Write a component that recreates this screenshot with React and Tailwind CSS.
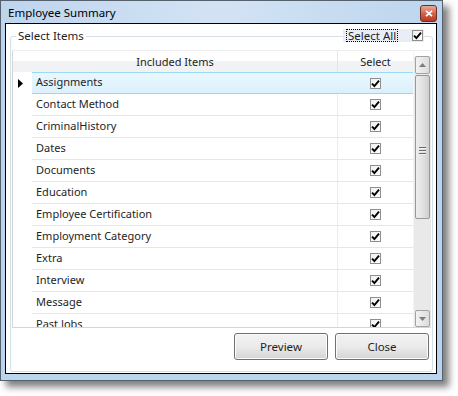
import React from 'react';

const items = [
    'Assignments',
    'Contact Method',
    'CriminalHistory',
    'Dates',
    'Documents',
    'Education',
    'Employee Certification',
    'Employment Category',
    'Extra',
    'Interview',
    'Message',
    'Past Jobs',
];

function CheckBox() {
    return (
        <span className="flex w-[11px] h-[11px] items-center justify-center border border-[#8e8f8f] bg-gradient-to-br from-[#f0f0f0] to-white">
            <svg width="9" height="9" viewBox="0 0 9 9">
                <path d="M1 4.6 L3.4 7 L8 1.6" fill="none" stroke="#000" strokeWidth="1.9" />
            </svg>
        </span>
    );
}

function WinButton({ label }) {
    return (
        <button className="w-[94px] h-[27px] rounded-[3px] border border-[#707070] bg-gradient-to-b from-[#f2f2f2] via-[#ebebeb] to-[#d4d4d4] text-[11.5px] text-[#1e1e1e] shadow-[inset_0_0_0_1px_#fcfcfc]">
            {label}
        </button>
    );
}

function ScrollBar() {
    return (
        <div className="w-[18px] flex flex-col bg-[#e9e9e9] border-l border-[#f4f4f4] pl-[1px] pr-[1px]">
            <div className="h-[5px] bg-white -mx-[1px]"></div>
            <div className="h-[18px] flex items-center justify-center rounded-[2px] border border-[#a3a3a3] bg-gradient-to-r from-[#f3f3f3] to-[#dcdcdc]">
                <svg width="7" height="4" viewBox="0 0 7 4">
                    <polygon points="0,4 3.5,0 7,4" fill="#7d7d7d" />
                </svg>
            </div>
            <div className="h-[144px] mt-[1px] flex items-center justify-center rounded-[2px] border border-[#989898] bg-gradient-to-r from-[#eeeeee] via-[#e2e2e2] to-[#cfcfcf]">
                <div className="flex flex-col gap-[1px] mt-[8px]">
                    <div className="w-[7px] h-[2px] border-t border-b border-t-[#6a6a6a] border-b-[#f0f0f0]"></div>
                    <div className="w-[7px] h-[2px] border-t border-b border-t-[#6a6a6a] border-b-[#f0f0f0]"></div>
                    <div className="w-[7px] h-[2px] border-t border-b border-t-[#6a6a6a] border-b-[#f0f0f0]"></div>
                </div>
            </div>
            <div className="flex-1"></div>
            <div className="h-[17px] flex items-center justify-center rounded-[2px] border border-[#a3a3a3] bg-gradient-to-r from-[#f3f3f3] to-[#dcdcdc]">
                <svg width="7" height="4" viewBox="0 0 7 4">
                    <polygon points="0,0 3.5,4 7,0" fill="#7d7d7d" />
                </svg>
            </div>
        </div>
    );
}

export default function App() {
    return (
        <div className="w-[458px] h-[396px] bg-white font-['Noto_Sans',sans-serif] text-[11px] text-[#1e1e1e] leading-none">
            <div className="w-[443px] h-[381px] flex flex-col border border-[#56616e] bg-[#bcd5ef] shadow-[6px_6px_7px_rgba(0,0,0,0.5)]">
                {/* title bar */}
                <div className="h-[22px] flex items-center justify-between pl-[7px] pr-[5px] bg-gradient-to-r from-[#bed5ee] via-[#d3e3f4] to-[#bcd5ee]">
                    <span className="text-[11.5px] text-black mt-[1px]">Employee Summary</span>
                    <div className="w-[17px] h-[17px] mt-[3px] flex items-center justify-center rounded-[3px] border border-[#6b3024] bg-gradient-to-b from-[#e9a898] via-[#d4634c] to-[#b8361f]">
                        <svg width="8" height="7" viewBox="0 0 8 7">
                            <path d="M1 0.8 L7 6.2 M7 0.8 L1 6.2" stroke="#fff" strokeWidth="1.8" />
                        </svg>
                    </div>
                </div>

                <div className="flex-1 flex pl-[4px] pr-[5px] pb-[6px]">
                    {/* client area */}
                    <div className="flex-1 flex flex-col border border-black bg-white pl-[4px] pr-[3px] pt-[12px] pb-[1px]">
                        {/* group box */}
                        <div className="relative flex-1 flex flex-col border border-[#d5dfe5] rounded-[3px] px-[1px]">
                            <span className="absolute left-[5px] -top-[8px] px-[2px] bg-white leading-[14px] text-[11.5px]">Select Items</span>
                            <div className="absolute left-[332px] -top-[8px] w-[81px] h-[13px] flex items-center justify-between bg-[#e9eef6] pl-[3px] pr-[1px]">
                                <span className="px-[1px] h-[13px] leading-[11px] whitespace-nowrap border border-dotted border-black text-[11.5px]">Select All</span>
                                <CheckBox />
                            </div>

                            {/* grid */}
                            <div className="mt-[13px] h-[278px] flex border-l border-b border-t border-[#d5d5d5] border-t-[#ececec] bg-white">
                                <div className="flex-1 flex flex-col">
                                    <div className="h-[21px] flex bg-gradient-to-b from-white from-50% to-[#f1f2f4] to-50%">
                                        <div className="w-[325px] flex items-center justify-center border-r border-[#e5e5e5]">Included Items</div>
                                        <div className="flex-1 flex items-center justify-center">Select</div>
                                    </div>
                                    <div className="flex-1 overflow-hidden">
                                        {items.map((item, i) => (
                                            <div key={item} className="h-[22px] flex">
                                                <div className="w-[19px] flex items-center pl-[5px]">
                                                    {i === 0 && (
                                                        <svg width="5" height="9" viewBox="0 0 5 9">
                                                            <polygon points="0,0 5,4.5 0,9" fill="#000" />
                                                        </svg>
                                                    )}
                                                </div>
                                                <div className={i === 0
                                                    ? 'flex-1 flex border-t border-b border-[#9ad8f5] bg-gradient-to-b from-[#eaf7fe] to-[#daf0fc]'
                                                    : 'flex-1 flex border-b border-[#e6e6e6]'}>
                                                    <div className={i === 0
                                                        ? 'w-[306px] flex items-center pl-[4px] pb-[3px]'
                                                        : 'w-[306px] flex items-center pl-[4px] pb-[3px] border-r border-[#ececec]'}>
                                                        {item}
                                                    </div>
                                                    <div className="flex-1 flex items-center justify-center">
                                                        <CheckBox />
                                                    </div>
                                                </div>
                                            </div>
                                        ))}
                                    </div>
                                </div>
                                <ScrollBar />
                            </div>

                            {/* buttons */}
                            <div className="flex justify-end gap-[7px] mt-[5px] pr-[2px]">
                                <WinButton label="Preview" />
                                <WinButton label="Close" />
                            </div>
                        </div>
                    </div>
                </div>
            </div>
        </div>
    );
}
